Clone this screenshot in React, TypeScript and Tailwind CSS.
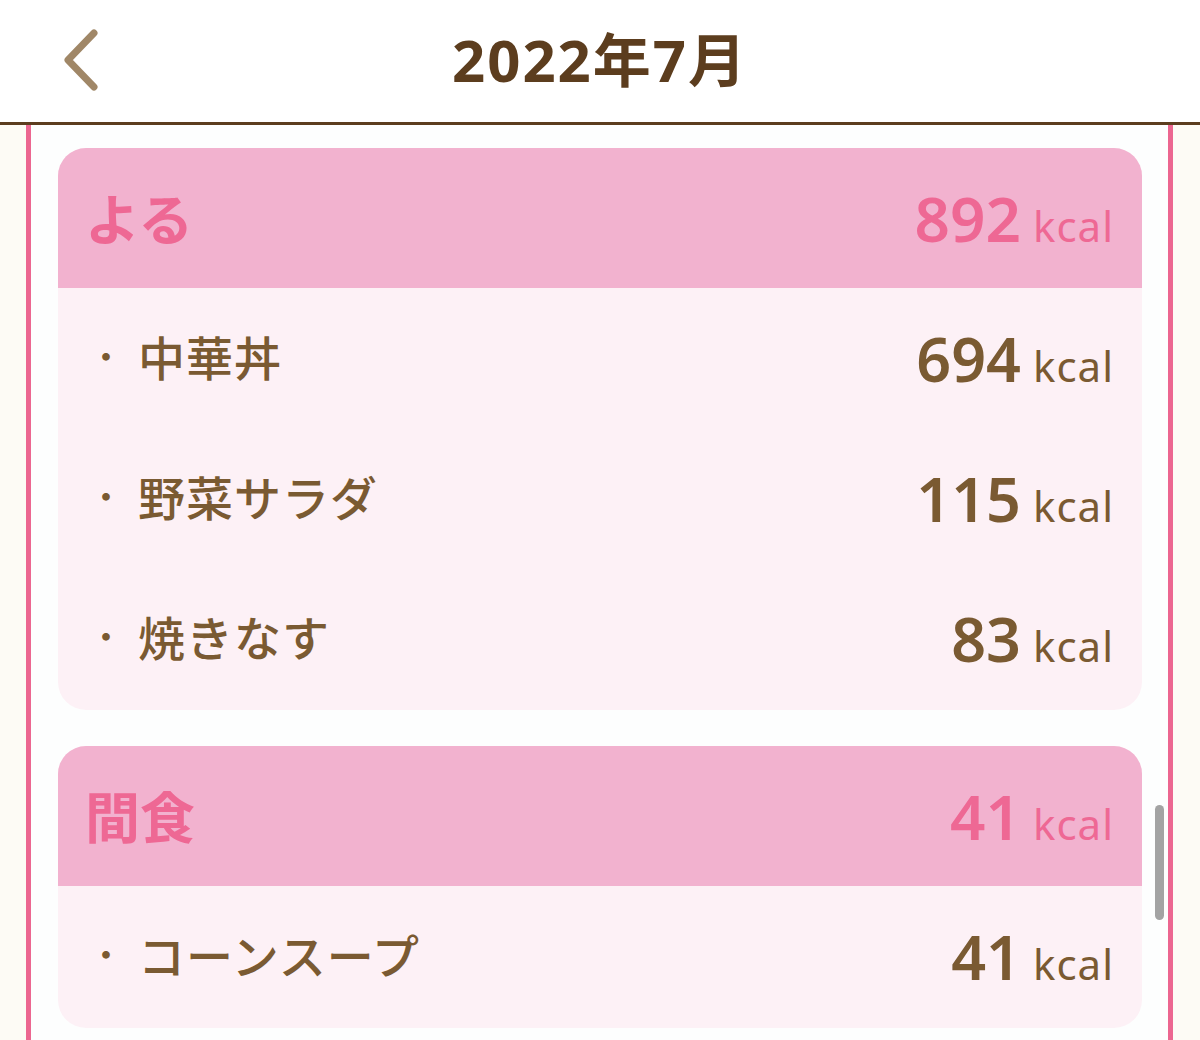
import React from 'react';

type Item = { name: string; kcal: number };
type Meal = { title: string; total: number; items: Item[] };

const meals: Meal[] = [
  {
    title: 'よる',
    total: 892,
    items: [
      { name: '中華丼', kcal: 694 },
      { name: '野菜サラダ', kcal: 115 },
      { name: '焼きなす', kcal: 83 },
    ],
  },
  {
    title: '間食',
    total: 41,
    items: [{ name: 'コーンスープ', kcal: 41 }],
  },
];

const font = { fontFamily: '"Noto Sans", "Noto Sans CJK JP", sans-serif' };

const MealCard: React.FC<{ meal: Meal }> = ({ meal }) => (
  <div className="rounded-[28px] overflow-hidden bg-[#fdf1f6] pb-[2px]">
    <div className="h-[140px] bg-[#f2b2cf] flex items-center justify-between pl-[27px] pr-[28px]">
      <span className="text-[55px] font-bold text-[#ee6894] leading-none">{meal.title}</span>
      <span className="flex items-baseline gap-[12px] text-[#ee6894] leading-none">
        <span className="text-[62px] font-semibold">{meal.total}</span>
        <span className="text-[42px] tracking-[1px]">kcal</span>
      </span>
    </div>
    {meal.items.map((it) => (
      <div key={it.name} className="h-[140px] flex items-center justify-between pl-[30px] pr-[28px] text-[#7a5a32]">
        <span className="flex items-center leading-none">
          <span className="text-[36px] w-[50px]">・</span>
          <span className="text-[47px] font-medium tracking-[1px]">{it.name}</span>
        </span>
        <span className="flex items-baseline gap-[12px] leading-none">
          <span className="text-[61px] font-semibold">{it.kcal}</span>
          <span className="text-[42px] tracking-[1px]">kcal</span>
        </span>
      </div>
    ))}
  </div>
);

export default function App() {
  return (
    <div className="w-[1200px] h-[1040px] overflow-hidden bg-[#fdfbf5] flex flex-col" style={font}>
      <header className="h-[125px] shrink-0 bg-white border-b-[3px] border-[#5c3d1e] relative flex items-center justify-center">
        <svg
          className="absolute left-[62px] top-[28px]"
          width="40"
          height="64"
          viewBox="0 0 40 64"
          fill="none"
          stroke="#a08767"
          strokeWidth="7"
          strokeLinecap="round"
          strokeLinejoin="round"
        >
          <path d="M32 5 L6 32 L32 59" />
        </svg>
        <h1 className="text-[58px] font-bold text-[#5c3d1e] leading-none tracking-[2px] pb-[2px]">2022年7月</h1>
      </header>
      <div className="flex-1 ml-[26px] mr-[27px] border-l-[5px] border-r-[5px] border-[#ec6690] bg-[#fdfefe] relative">
        <div className="pt-[23px] pl-[27px] pr-[26px] flex flex-col gap-[36px]">
          {meals.map((m) => (
            <MealCard key={m.title} meal={m} />
          ))}
        </div>
        <div className="absolute right-[4px] top-[680px] w-[9px] h-[115px] rounded-full bg-[#a3a3a3]" />
      </div>
    </div>
  );
}
